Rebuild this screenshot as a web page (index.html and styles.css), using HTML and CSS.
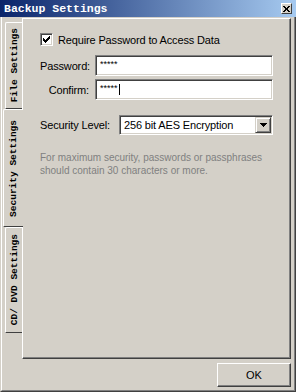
FILE: index.html
```html
<!DOCTYPE html>
<html lang="en">
<head>
    <meta charset="UTF-8">
    <title>Backup Settings</title>
    <link rel="stylesheet" href="styles.css">
</head>
<body>
    <div class="titlebar">
        <span class="title">Backup Settings</span>
        <span class="close-btn">
            <svg width="7" height="6" viewBox="0 0 7 6" shape-rendering="crispEdges">
                <path d="M0 0h2v1h-2zM5 0h2v1h-2zM1 1h2v1h-2zM4 1h2v1h-2zM2 2h3v2h-3zM1 4h2v1h-2zM4 4h2v1h-2zM0 5h2v1h-2zM5 5h2v1h-2z" fill="#000"/>
            </svg>
        </span>
    </div>

    <div class="window">
        <div class="frame">
            <div class="main">
                <div class="tabs">
                    <div class="tab tab-file"><span>File Settings</span></div>
                    <div class="tab tab-security active"><span>Security Settings</span></div>
                    <div class="tab tab-cd"><span>CD/ DVD Settings</span></div>
                </div>

                <div class="panel">
                    <div class="check-row">
                        <span class="checkbox">
                            <svg width="7" height="7" viewBox="0 0 7 7" shape-rendering="crispEdges">
                                <path d="M6 0h1v3h-1v1h-1v1h-1v1h-1v1h-1v-1h-1v-1h-1v-3h1v1h1v1h1v-1h1v-1h1z" fill="#000"/>
                            </svg>
                        </span>
                        <span>Require Password to Access Data</span>
                    </div>

                    <div class="fields">
                        <span class="field-label">Password:</span>
                        <div class="textbox"><span class="stars">*****</span></div>
                        <span class="field-label">Confirm:</span>
                        <div class="textbox"><span class="stars">*****</span><span class="caret"></span></div>
                    </div>

                    <div class="level-row">
                        <span class="level-label">Security Level:</span>
                        <div class="select">
                            <span class="select-value">256 bit AES Encryption</span>
                            <span class="drop-btn">
                                <svg width="7" height="4" viewBox="0 0 7 4" shape-rendering="crispEdges">
                                    <path d="M0 0h7v1h-1v1h-1v1h-1v1h-1v-1h-1v-1h-1v-1h-1z" fill="#000"/>
                                </svg>
                            </span>
                        </div>
                    </div>

                    <p class="help-text">For maximum security, passwords or passphrases<br>should contain 30 characters or more.</p>
                </div>
            </div>

            <div class="footer">
                <button type="button" class="btn">OK</button>
            </div>
        </div>
    </div>
</body>
</html>
```

FILE: styles.css
```css
* {
    box-sizing: border-box;
}

body {
    margin: 0;
    width: 296px;
    height: 392px;
    overflow: hidden;
    background-color: #d4d0c8;
    font-family: "Liberation Sans", Arial, sans-serif;
    font-size: 11px;
    letter-spacing: -0.15px;
    color: #000;
}

.titlebar {
    height: 17px;
    display: flex;
    align-items: center;
    justify-content: space-between;
    padding: 0 4px;
    background: linear-gradient(to right, #0a246a, #a6caf0);
}

.title {
    color: #fff;
    font-family: "Liberation Mono", monospace;
    font-weight: bold;
    font-size: 11.5px;
    letter-spacing: 0;
}

.close-btn {
    width: 11px;
    height: 11px;
    display: flex;
    align-items: center;
    justify-content: center;
    background-color: #d4d0c8;
    border: 1px solid;
    border-color: #fff #404040 #404040 #fff;
}

.window {
    height: 375px;
    border: 1px solid;
    border-top: 0;
    border-color: #d4d0c8 #404040 #404040 #d4d0c8;
}

.frame {
    height: 100%;
    display: flex;
    flex-direction: column;
    padding-top: 1px;
    border: 1px solid;
    border-top: 0;
    border-color: #fff #808080 #808080 #fff;
}

.main {
    flex: 1;
    display: flex;
    padding-right: 3px;
}

.tabs {
    width: 20px;
    padding-top: 4px;
    display: flex;
    flex-direction: column;
    align-items: flex-end;
}

.tab {
    width: 17px;
    display: flex;
    align-items: center;
    justify-content: center;
    border-top: 1px solid #fff;
    border-left: 1px solid #fff;
    border-bottom: 1px solid #404040;
    border-top-left-radius: 2px;
}

.tab span {
    writing-mode: vertical-rl;
    transform: rotate(180deg);
    font-family: "Liberation Mono", monospace;
    font-weight: bold;
    font-size: 9.5px;
    letter-spacing: 0;
    white-space: nowrap;
}

.tab-file {
    height: 87px;
}

.tab-security {
    height: 118px;
    width: 20px;
    margin-right: -1px;
    position: relative;
    z-index: 1;
    background-color: #d4d0c8;
}

.tab-cd {
    height: 106px;
}

.panel {
    flex: 1;
    padding: 14px 0 0 17px;
    border: 1px solid;
    border-color: #fff #404040 #404040 #fff;
    box-shadow: inset -1px -1px 0 #808080;
}

.check-row {
    display: flex;
    align-items: center;
    gap: 5px;
    height: 13px;
}

.checkbox {
    width: 13px;
    height: 13px;
    display: flex;
    align-items: center;
    justify-content: center;
    background-color: #fff;
    border: 1px solid;
    border-color: #808080 #fff #fff #808080;
    box-shadow: inset 1px 1px 0 #404040, inset -1px -1px 0 #d4d0c8;
}

.fields {
    display: grid;
    grid-template-columns: 49px 178px;
    column-gap: 6px;
    row-gap: 3px;
    align-items: center;
    margin-top: 9px;
}

.field-label {
    text-align: right;
}

.textbox,
.select {
    background-color: #fff;
    border: 1px solid;
    border-color: #808080 #fff #fff #808080;
    box-shadow: inset 1px 1px 0 #404040, inset -1px -1px 0 #d4d0c8;
    display: flex;
    align-items: center;
}

.textbox {
    height: 21px;
    padding-left: 4px;
}

.stars {
    font-size: 9px;
    line-height: 9px;
    margin-top: -3px;
    letter-spacing: 0;
}

.caret {
    width: 1px;
    height: 11px;
    margin-left: 1px;
    background-color: #000;
}

.level-row {
    display: flex;
    align-items: center;
    margin-top: 15px;
}

.level-label {
    width: 79px;
}

.select {
    width: 154px;
    height: 20px;
    padding: 1px;
    justify-content: space-between;
}

.select-value {
    padding-left: 3px;
    font-size: 11px;
}

.drop-btn {
    width: 16px;
    height: 16px;
    display: flex;
    align-items: center;
    justify-content: center;
    background-color: #d4d0c8;
    border: 1px solid;
    border-color: #d4d0c8 #404040 #404040 #d4d0c8;
    box-shadow: inset 1px 1px 0 #fff, inset -1px -1px 0 #808080;
}

.help-text {
    margin: 16px 0 0 0;
    color: #808080;
    font-size: 10px;
    line-height: 13px;
    letter-spacing: 0;
}

.footer {
    height: 31px;
    display: flex;
    justify-content: flex-end;
    padding: 4px 3px 0 0;
}

.btn {
    width: 74px;
    height: 24px;
    padding: 0;
    background-color: #d4d0c8;
    border: 1px solid;
    border-color: #fff #404040 #404040 #fff;
    box-shadow: inset -1px -1px 0 #808080;
    font-family: "Liberation Sans", Arial, sans-serif;
    font-size: 11px;
    color: #000;
}
```
